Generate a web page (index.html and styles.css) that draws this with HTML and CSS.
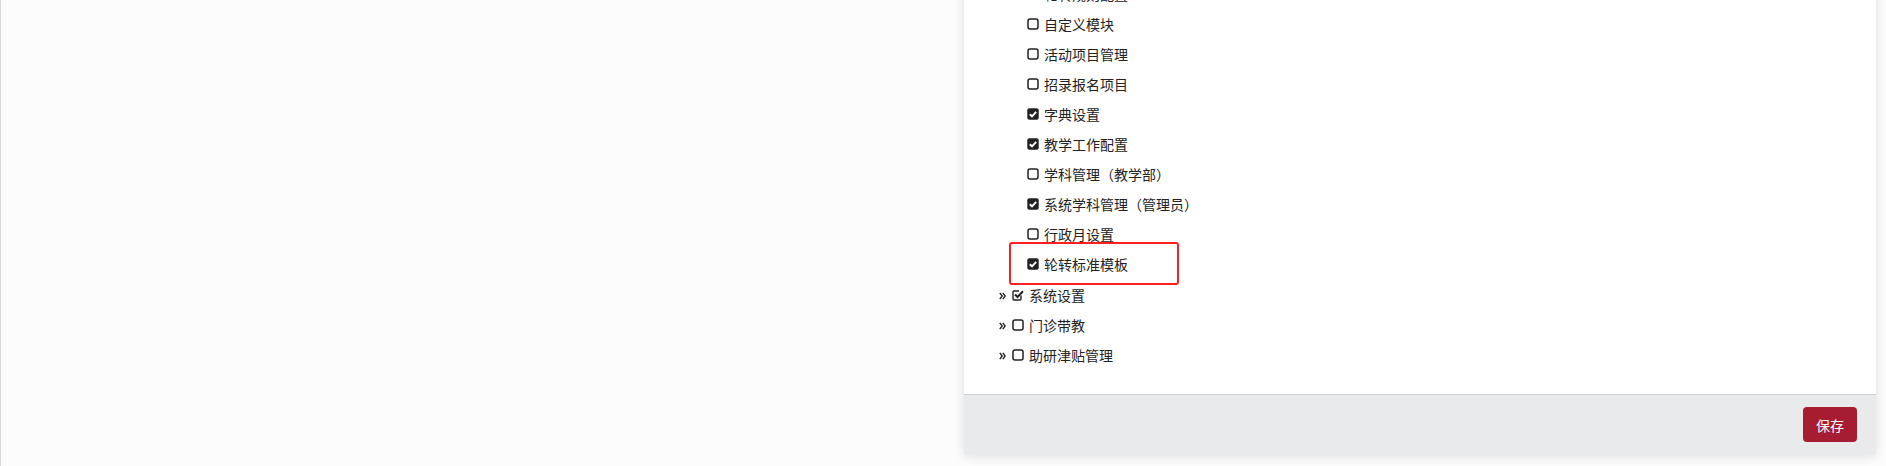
FILE: index.html
```html
<!DOCTYPE html>
<html lang="zh">
<head>
<meta charset="utf-8">
<link rel="stylesheet" href="styles.css">
<title>权限设置</title>
</head>
<body>
<div class="page">
  <div class="left"></div>
  <div class="panel">
    <div class="panel-body">
      <ul class="tree">
        <li class="node">
          <ul class="sub">
            <li class="row"><svg class="cb" viewBox="0 0 12 12"><rect x="1" y="1" width="10" height="10" rx="2" fill="none" stroke="#222" stroke-width="1.5"/></svg><span>轮转规则配置</span></li>
            <li class="row"><svg class="cb" viewBox="0 0 12 12"><rect x="1" y="1" width="10" height="10" rx="2" fill="none" stroke="#222" stroke-width="1.5"/></svg><span>自定义模块</span></li>
            <li class="row"><svg class="cb" viewBox="0 0 12 12"><rect x="1" y="1" width="10" height="10" rx="2" fill="none" stroke="#222" stroke-width="1.5"/></svg><span>活动项目管理</span></li>
            <li class="row"><svg class="cb" viewBox="0 0 12 12"><rect x="1" y="1" width="10" height="10" rx="2" fill="none" stroke="#222" stroke-width="1.5"/></svg><span>招录报名项目</span></li>
            <li class="row"><svg class="cb" viewBox="0 0 12 12"><rect x="0.3" y="0.3" width="11.4" height="11.4" rx="2" fill="#222"/><path d="M2.8 6.2 L5 8.3 L9.2 3.9" fill="none" stroke="#fff" stroke-width="1.9"/></svg><span>字典设置</span></li>
            <li class="row"><svg class="cb" viewBox="0 0 12 12"><rect x="0.3" y="0.3" width="11.4" height="11.4" rx="2" fill="#222"/><path d="M2.8 6.2 L5 8.3 L9.2 3.9" fill="none" stroke="#fff" stroke-width="1.9"/></svg><span>教学工作配置</span></li>
            <li class="row"><svg class="cb" viewBox="0 0 12 12"><rect x="1" y="1" width="10" height="10" rx="2" fill="none" stroke="#222" stroke-width="1.5"/></svg><span>学科管理（教学部）</span></li>
            <li class="row"><svg class="cb" viewBox="0 0 12 12"><rect x="0.3" y="0.3" width="11.4" height="11.4" rx="2" fill="#222"/><path d="M2.8 6.2 L5 8.3 L9.2 3.9" fill="none" stroke="#fff" stroke-width="1.9"/></svg><span>系统学科管理（管理员）</span></li>
            <li class="row"><svg class="cb" viewBox="0 0 12 12"><rect x="1" y="1" width="10" height="10" rx="2" fill="none" stroke="#222" stroke-width="1.5"/></svg><span>行政月设置</span></li>
            <li class="row marked"><svg class="cb" viewBox="0 0 12 12"><rect x="0.3" y="0.3" width="11.4" height="11.4" rx="2" fill="#222"/><path d="M2.8 6.2 L5 8.3 L9.2 3.9" fill="none" stroke="#fff" stroke-width="1.9"/></svg><span>轮转标准模板</span><div class="highlight"></div></li>
          </ul>
        </li>
        <li class="row top"><svg class="arrow" viewBox="0 0 7 8"><path d="M0.8 0.8 L3.2 4 L0.8 7.2 M3.8 0.8 L6.2 4 L3.8 7.2" fill="none" stroke="#222" stroke-width="1.4"/></svg><svg class="cb" viewBox="0 0 12 12"><path d="M9 6.5 V10 a1 1 0 0 1 -1 1 H2 a1 1 0 0 1 -1 -1 V3 a1 1 0 0 1 1 -1 H7" fill="none" stroke="#222" stroke-width="1.4"/><path d="M3 5.5 L5.5 8 L11 2.2" fill="none" stroke="#222" stroke-width="2"/></svg><span>系统设置</span></li>
        <li class="row top"><svg class="arrow" viewBox="0 0 7 8"><path d="M0.8 0.8 L3.2 4 L0.8 7.2 M3.8 0.8 L6.2 4 L3.8 7.2" fill="none" stroke="#222" stroke-width="1.4"/></svg><svg class="cb" viewBox="0 0 12 12"><rect x="1" y="1" width="10" height="10" rx="2" fill="none" stroke="#222" stroke-width="1.5"/></svg><span>门诊带教</span></li>
        <li class="row top"><svg class="arrow" viewBox="0 0 7 8"><path d="M0.8 0.8 L3.2 4 L0.8 7.2 M3.8 0.8 L6.2 4 L3.8 7.2" fill="none" stroke="#222" stroke-width="1.4"/></svg><svg class="cb" viewBox="0 0 12 12"><rect x="1" y="1" width="10" height="10" rx="2" fill="none" stroke="#222" stroke-width="1.5"/></svg><span>助研津贴管理</span></li>
      </ul>
    </div>
    <div class="panel-footer">
      <button class="btn-save">保存</button>
    </div>
  </div>
</div>
</body>
</html>
```

FILE: styles.css
```css
html, body {
  margin: 0;
  padding: 0;
  height: 100%;
  overflow: hidden;
  background: #fcfcfc;
}
body {
  font-family: "Noto Sans CJK SC", "Noto Sans", sans-serif;
  font-size: 14px;
  color: #222;
}
.page {
  display: flex;
  height: 466px;
  border-left: 1px solid #d9d9d9;
  box-sizing: border-box;
}
.left {
  flex: 1;
}
.panel {
  width: 912px;
  margin-right: 10px;
  margin-top: -21px;
  align-self: flex-start;
  background: #fff;
  box-shadow: 0 2px 10px rgba(0, 0, 0, 0.12);
  display: flex;
  flex-direction: column;
}
.panel-body {
  padding: 0 0 24px 0;
}
.tree, .sub {
  list-style: none;
  margin: 0;
  padding: 0;
}
.sub {
  padding-left: 63px;
}
.row {
  position: relative;
  display: flex;
  align-items: center;
  height: 30px;
  line-height: 30px;
}
.row .cb {
  width: 12px;
  height: 12px;
  flex: none;
  margin-right: 5px;
}
.top {
  padding-left: 35px;
}
.node + .top {
  margin-top: 1px;
}
.arrow {
  width: 7px;
  height: 8px;
  flex: none;
  margin-right: 6px;
  margin-top: 1px;
}
.highlight {
  position: absolute;
  left: -18px;
  top: -7px;
  width: 166px;
  height: 39px;
  border: 2px solid #ff1f1f;
  border-radius: 3px;
  pointer-events: none;
}
.panel-footer {
  border-top: 1px solid #c9d3da;
  background: #e9eaec;
  height: 59px;
  display: flex;
  align-items: center;
  justify-content: flex-end;
  padding-right: 19px;
}
.btn-save {
  width: 54px;
  height: 35px;
  background: #a61c31;
  color: #fff;
  border: none;
  border-radius: 4px;
  font-family: "Noto Sans CJK SC", sans-serif;
  font-size: 14px;
  padding: 0;
}
```
